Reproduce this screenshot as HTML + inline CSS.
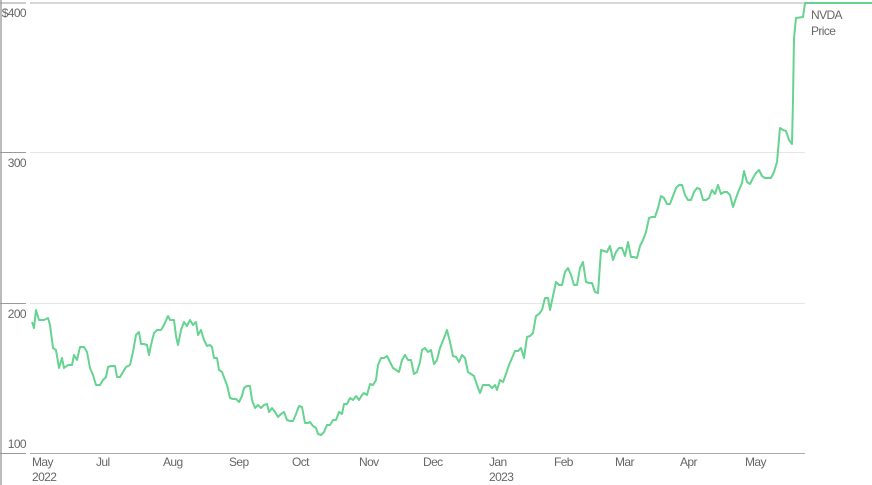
<!DOCTYPE html>
<html><head><style>
html,body{margin:0;padding:0;background:#fff;width:872px;height:485px;overflow:hidden}
svg{display:block}
text{font-family:"Liberation Sans",sans-serif;font-size:12px;fill:#666;letter-spacing:-0.6px}
</style></head><body>
<svg width="872" height="485" viewBox="0 0 872 485">
<line x1="1" y1="0" x2="1" y2="485" stroke="#bbb" stroke-width="2"/>
<line x1="0" y1="3" x2="26" y2="3" stroke="#999"/>
<line x1="30" y1="3" x2="872" y2="3" stroke="#ccc" stroke-width="1.5"/>
<line x1="0" y1="152.5" x2="26" y2="152.5" stroke="#999"/>
<line x1="30" y1="152.5" x2="805" y2="152.5" stroke="#e6e6e6"/>
<line x1="0" y1="303.5" x2="26" y2="303.5" stroke="#999"/>
<line x1="30" y1="303.5" x2="805" y2="303.5" stroke="#e6e6e6"/>
<line x1="0" y1="453.5" x2="26" y2="453.5" stroke="#999"/>
<line x1="30" y1="453.5" x2="805" y2="453.5" stroke="#aaa"/>
<text x="26" y="17" text-anchor="end">$400</text>
<text x="26" y="167" text-anchor="end">300</text>
<text x="26" y="318" text-anchor="end">200</text>
<text x="26" y="448" text-anchor="end">100</text>
<text x="32" y="466">May</text><text x="32" y="481">2022</text>
<text x="96" y="466">Jul</text>
<text x="163" y="466">Aug</text>
<text x="229" y="466">Sep</text>
<text x="292" y="466">Oct</text>
<text x="359" y="466">Nov</text>
<text x="423" y="466">Dec</text>
<text x="489" y="466">Jan</text><text x="489" y="481">2023</text>
<text x="554" y="466">Feb</text>
<text x="615" y="466">Mar</text>
<text x="680" y="466">Apr</text>
<text x="745" y="466">May</text>
<text x="811" y="19">NVDA</text>
<text x="811" y="35">Price</text>
<polyline fill="none" stroke="#66d390" stroke-width="2" stroke-linejoin="round" points="32,322 34,328 36,310 39,320 44,320 48,318 50,325 53,348 56,350 59,368 62,358 64,368 68,365 72,365 74,355 77,360 80,347 84,347 87,352 90,368 93,375 96,385 100,385 103,380 106,377 108,367 111,366 115,366 117,377 120,377 123,372 126,367 130,365 133,352 136,335 139,332 141,344 144,344 147,345 149,355 151,345 154,333 157,330 161,330 164,325 168,316 170,320 174,320 176,336 178,345 181,330 184,322 187,326 190,320 193,325 196,322 198,335 201,330 204,340 207,346 210,345 212,347 214,358 217,358 219,370 222,372 225,380 227,385 230,398 233,399 236,399 239,402 242,396 244,388 247,386 250,386 252,400 255,408 258,405 261,408 264,405 267,404 269,412 272,408 275,412 278,417 281,414 284,412 287,420 290,421 293,421 296,414 299,406 302,407 305,423 308,423 310,422 313,426 316,428 318,434 321,435 324,432 327,425 330,425 333,420 336,420 339,412 342,414 344,404 347,404 350,398 353,400 356,396 359,400 362,395 364,393 367,395 370,384 373,385 376,380 378,365 381,358 384,358 387,356 390,362 393,368 396,370 399,372 402,360 405,355 408,360 411,360 414,374 417,372 420,362 422,350 425,348 428,352 431,350 434,364 437,360 440,348 444,338 447,330 450,342 453,356 456,357 459,362 462,355 465,358 468,372 471,374 474,376 477,385 480,393 483,385 486,385 489,385 492,388 495,385 497,390 500,380 503,382 506,374 509,365 512,358 515,351 518,351 521,348 524,358 527,337 530,336 533,333 536,316 539,314 542,310 545,298 548,298 550,310 553,296 556,282 559,285 562,285 565,272 568,268 571,275 574,285 577,285 580,268 583,262 586,282 589,283 592,283 595,292 598,293 601,250 604,251 607,252 610,246 613,260 616,252 619,248 622,248 625,256 628,242 631,257 634,257 637,258 640,246 643,240 646,232 649,218 652,217 655,217 658,208 661,196 664,198 667,204 670,204 673,196 676,188 679,185 682,185 685,195 688,200 691,200 694,192 697,188 700,189 703,200 706,200 709,198 712,190 715,194 718,185 721,194 724,192 727,192 730,195 733,207 736,198 739,190 742,183 744,171 747,182 750,184 753,178 756,173 759,170 762,176 765,178 768,178 771,178 774,172 777,162 780,128 783,130 786,131 789,140 792,144 793,100 794,38 796,18 803,17 805,3 872,3"/>
</svg>
</body></html>
